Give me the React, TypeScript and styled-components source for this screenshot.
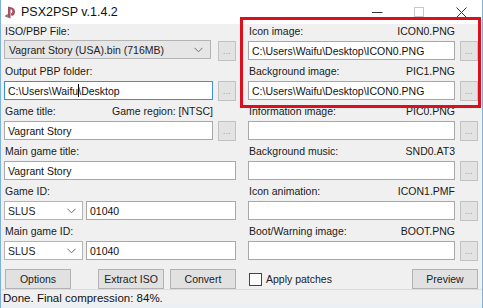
import React from 'react';
import styled, { createGlobalStyle } from 'styled-components';

const GlobalStyle = createGlobalStyle`
  html, body {
    margin: 0;
    padding: 0;
    background: #ffffff;
  }
  body {
    font-family: "Liberation Sans", Arial, sans-serif;
    font-size: 10.5px;
    color: #000;
  }
  * {
    box-sizing: border-box;
  }
`;

interface FieldProps {
  label: string;
  hint?: string;
  children: React.ReactNode;
}

function Field({ label, hint, children }: FieldProps) {
  return (
    <Group>
      <LabelRow>
        <span>{label}</span>
        {hint && <span>{hint}</span>}
      </LabelRow>
      <ControlRow>{children}</ControlRow>
    </Group>
  );
}

function Chevron() {
  return (
    <svg width="9" height="6" viewBox="0 0 9 6">
      <path d="M0.5 0.8 L4.5 4.8 L8.5 0.8" fill="none" stroke="#707070" strokeWidth="1" />
    </svg>
  );
}

function PsIcon() {
  return (
    <svg width="11" height="13" viewBox="0 0 11 13">
      <path d="M3 0.5 L3 11.5 L5.5 12.5 L5.5 3.2 C7 3.4 7.3 4.3 7.3 5.5 C7.3 6.8 6.8 7.4 6 7.1 L6 9.6 C8.6 10.2 10 8.5 10 5.8 C10 2.5 8 1.6 3 0.5 Z" fill="#a8505f" />
      <path d="M0.3 10.2 C0 9.3 1.6 8.6 3 8.2 L3 9.5 C2 9.8 1.8 10.2 3 10.3 L3 11.4 C1.4 11.5 0.5 11 0.3 10.2 Z" fill="#6a6a7a" />
    </svg>
  );
}

export default function App() {
  return (
    <>
      <GlobalStyle />
      <Window>
        <TitleBar>
          <TitleLeft>
            <PsIcon />
            <span>PSX2PSP v.1.4.2</span>
          </TitleLeft>
          <Controls>
            <svg width="11" height="11" viewBox="0 0 11 11">
              <path d="M0 5.5 H10.5" stroke="#333" strokeWidth="1" />
            </svg>
            <svg width="11" height="11" viewBox="0 0 11 11">
              <rect x="0.5" y="0.5" width="9" height="9" fill="none" stroke="#c8c8c8" strokeWidth="1" />
            </svg>
            <svg width="11" height="11" viewBox="0 0 11 11">
              <path d="M0.5 0.5 L10.5 10.5 M10.5 0.5 L0.5 10.5" stroke="#333" strokeWidth="1" />
            </svg>
          </Controls>
        </TitleBar>

        <Body>
          <Column>
            <Field label="ISO/PBP File:">
              <Combo>
                <span>Vagrant Story (USA).bin (716MB)</span>
                <Chevron />
              </Combo>
              <Browse>...</Browse>
            </Field>
            <Field label="Output PBP folder:">
              <TextBox focused>
                C:\Users\Waifu<Caret />\Desktop
              </TextBox>
              <Browse>...</Browse>
            </Field>
            <Field label="Game title:" hint="Game region: [NTSC]">
              <TextBox>Vagrant Story</TextBox>
              <Browse>...</Browse>
            </Field>
            <Field label="Main game title:">
              <TextBox>Vagrant Story</TextBox>
            </Field>
            <Field label="Game ID:">
              <IdSelect>
                <span>SLUS</span>
                <Chevron />
              </IdSelect>
              <TextBox>01040</TextBox>
            </Field>
            <Field label="Main game ID:">
              <IdSelect>
                <span>SLUS</span>
                <Chevron />
              </IdSelect>
              <TextBox>01040</TextBox>
            </Field>
            <ButtonRow>
              <Button>Options</Button>
              <ButtonPair>
                <Button>Extract ISO</Button>
                <Button>Convert</Button>
              </ButtonPair>
            </ButtonRow>
          </Column>

          <Column>
            <Field label="Icon image:" hint="ICON0.PNG">
              <TextBox>C:\Users\Waifu\Desktop\ICON0.PNG</TextBox>
              <Browse>...</Browse>
            </Field>
            <Field label="Background image:" hint="PIC1.PNG">
              <TextBox>C:\Users\Waifu\Desktop\ICON0.PNG</TextBox>
              <Browse>...</Browse>
            </Field>
            <Field label="Information image:" hint="PIC0.PNG">
              <TextBox />
              <Browse>...</Browse>
            </Field>
            <Field label="Background music:" hint="SND0.AT3">
              <TextBox />
              <Browse>...</Browse>
            </Field>
            <Field label="Icon animation:" hint="ICON1.PMF">
              <TextBox />
              <Browse>...</Browse>
            </Field>
            <Field label="Boot/Warning image:" hint="BOOT.PNG">
              <TextBox />
              <Browse>...</Browse>
            </Field>
            <ButtonRow>
              <CheckLabel>
                <CheckBox />
                Apply patches
              </CheckLabel>
              <Button>Preview</Button>
            </ButtonRow>
          </Column>
        </Body>

        <StatusBar>Done. Final compression: 84%.</StatusBar>
        <Highlight />
      </Window>
    </>
  );
}

const Window = styled.div`
  position: relative;
  width: 483px;
  height: 308px;
  background-color: #f0f0f0;
  border-left: 1px solid #7fb2da;
  border-right: 1px solid #7fb2da;
  display: flex;
  flex-direction: column;
  overflow: hidden;
`;

const TitleBar = styled.div`
  height: 24px;
  background-color: #ffffff;
  display: flex;
  justify-content: space-between;
  align-items: center;
  padding: 0 15px 0 4px;
  font-size: 12.5px;
  color: #111;
`;

const TitleLeft = styled.div`
  display: flex;
  align-items: center;
  gap: 5px;
`;

const Controls = styled.div`
  display: flex;
  align-items: center;
  gap: 31px;
  svg {
    display: block;
  }
`;

const Body = styled.div`
  flex: 1;
  display: grid;
  grid-template-columns: 232px 230px;
  column-gap: 12px;
  padding: 0 0 0 3px;
`;

const Column = styled.div`
  display: flex;
  flex-direction: column;
  gap: 4px;
`;

const Group = styled.div`
  display: flex;
  flex-direction: column;
`;

const LabelRow = styled.div`
  height: 16px;
  display: flex;
  justify-content: space-between;
  align-items: center;
  padding: 0 23px 2px 1px;
  color: #1a1a1a;
  span:only-child {
    flex: 1;
  }
`;

const ControlRow = styled.div`
  height: 20px;
  display: flex;
  gap: 3px;
`;

const TextBox = styled.div<{ focused?: boolean }>`
  flex: 1;
  height: 19px;
  margin-top: 1px;
  background-color: #ffffff;
  border: 1px solid ${props => (props.focused ? '#3c8fd6' : '#a8a8a8')};
  padding: 0 3px;
  display: flex;
  align-items: center;
  white-space: nowrap;
  overflow: hidden;
  font-size: 10.5px;
  color: #111;
`;

const Caret = styled.span`
  display: inline-block;
  width: 1px;
  height: 13px;
  background-color: #000;
  margin: 0 -1px 0 0;
`;

const Combo = styled.div`
  flex: 1;
  height: 19px;
  margin-right: 2px;
  background-color: #e6e6e6;
  border: 1px solid #b4b4b4;
  padding: 0 7px 0 4px;
  display: flex;
  justify-content: space-between;
  align-items: center;
  color: #222;
`;

const IdSelect = styled(Combo)`
  flex: 0 0 79px;
  margin-right: 0;
  margin-top: 1px;
  background-color: #ffffff;
  padding: 0 6px 0 3px;
`;

const Browse = styled.div`
  flex: 0 0 18px;
  height: 20px;
  margin: 1px 0 0 2px;
  background-color: #e3e3e3;
  border: 1px solid #c2c2c2;
  display: flex;
  justify-content: center;
  align-items: flex-end;
  padding-bottom: 4px;
  font-size: 8px;
  color: #808080;
  letter-spacing: 0.5px;
`;

const ButtonRow = styled.div`
  margin-top: 5px;
  height: 20px;
  display: flex;
  justify-content: space-between;
  align-items: center;
  padding-left: 1px;
`;

const ButtonPair = styled.div`
  display: flex;
  gap: 6px;
`;

const Button = styled.div`
  width: 66px;
  height: 20px;
  background-color: #e1e1e1;
  border: 1px solid #b2b2b2;
  display: flex;
  justify-content: center;
  align-items: center;
  font-size: 10.5px;
  color: #222;
`;

const CheckLabel = styled.div`
  display: flex;
  align-items: center;
  gap: 4px;
  color: #222;
`;

const CheckBox = styled.div`
  width: 13px;
  height: 13px;
  background-color: #ffffff;
  border: 1px solid #444;
`;

const StatusBar = styled.div`
  height: 19px;
  border-top: 1px solid #dcdcdc;
  background: linear-gradient(#f0f0f0 75%, #e6f0f8);
  padding: 2px 0 0 2px;
  font-size: 11.5px;
  color: #111;
`;

const Highlight = styled.div`
  position: absolute;
  left: 239px;
  top: 17px;
  width: 241px;
  height: 91px;
  border: 3px solid #dc0f1c;
  pointer-events: none;
`;
